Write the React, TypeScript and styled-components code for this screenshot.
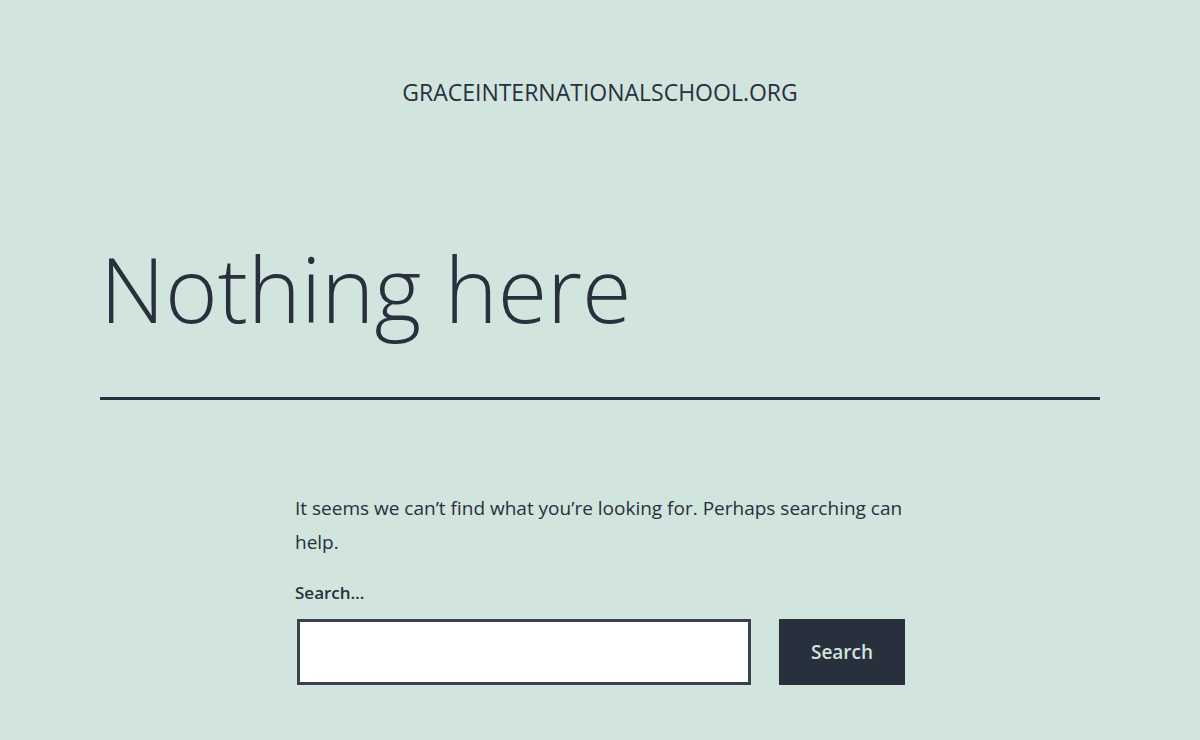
import React from "react";
import styled, { createGlobalStyle } from "styled-components";

const Global = createGlobalStyle`
  html, body { margin: 0; padding: 0; background: #d1e4dd; }
  body { font-family: "Open Sans", "Noto Sans", sans-serif; color: #28303d; }
  * { box-sizing: border-box; }
`;

const Page = styled.div`
  min-height: 740px;
  background: #d1e4dd;
  display: flex;
  flex-direction: column;
`;

const Header = styled.header`
  padding-top: 76px;
  display: flex;
  justify-content: center;
`;

const SiteTitle = styled.p`
  margin: 0;
  font-size: 23px;
  line-height: 32px;
  text-transform: uppercase;
  color: #28303d;
`;

const Main = styled.main`
  padding: 0 100px;
  display: flex;
  flex-direction: column;
`;

const PageHeader = styled.div`
  margin-top: 125px;
  padding-bottom: 54px;
  border-bottom: 3px solid #28303d;
`;

const Title = styled.h1`
  margin: 0;
  font-size: 90px;
  font-weight: 300;
  line-height: 110px;
  color: #28303d;
`;

const Content = styled.div`
  width: 610px;
  margin: 91px auto 0;
  display: flex;
  flex-direction: column;
`;

const Text = styled.p`
  margin: 0;
  font-size: 19px;
  line-height: 34px;
`;

const Form = styled.form`
  margin-top: 22px;
  display: flex;
  flex-direction: column;
`;

const Label = styled.label`
  font-size: 17px;
  font-weight: 600;
  line-height: 24px;
`;

const Row = styled.div`
  margin-top: 14px;
  display: flex;
  align-items: stretch;
  gap: 28px;
  padding-left: 2px;
`;

const Field = styled.input`
  width: 454px;
  height: 66px;
  border: 3px solid #39414d;
  background: #fff;
  outline: none;
  font-size: 20px;
  font-family: inherit;
  padding: 0 16px;
`;

const Button = styled.button`
  width: 126px;
  height: 66px;
  border: none;
  background: #28303d;
  color: #d1e4dd;
  font-family: inherit;
  font-size: 19px;
  font-weight: 600;
  cursor: pointer;
`;

export default function App() {
  return (
    <Page>
      <Global />
      <Header>
        <SiteTitle>graceinternationalschool.org</SiteTitle>
      </Header>
      <Main>
        <PageHeader>
          <Title>Nothing here</Title>
        </PageHeader>
        <Content>
          <Text>
            It seems we can’t find what you’re looking for. Perhaps searching can help.
          </Text>
          <Form onSubmit={(e) => e.preventDefault()}>
            <Label htmlFor="s">Search…</Label>
            <Row>
              <Field id="s" type="search" />
              <Button type="submit">Search</Button>
            </Row>
          </Form>
        </Content>
      </Main>
    </Page>
  );
}
